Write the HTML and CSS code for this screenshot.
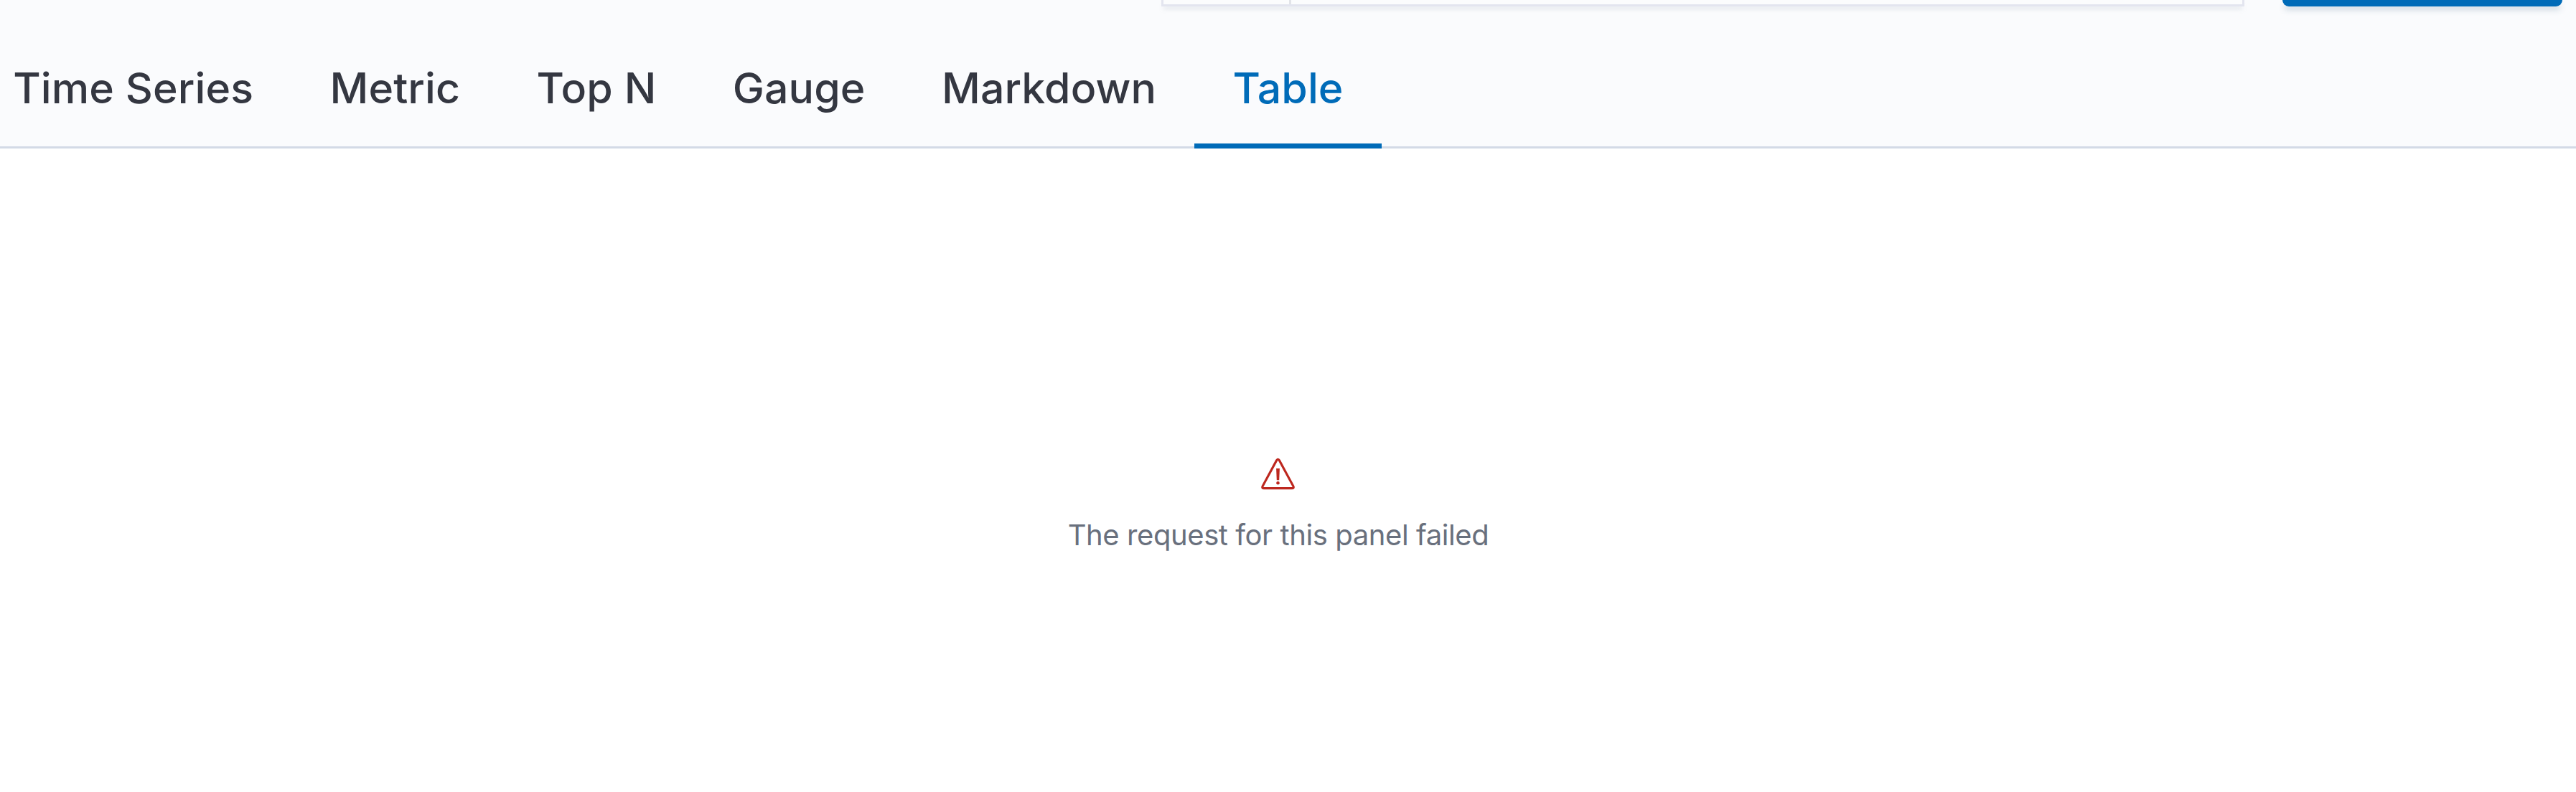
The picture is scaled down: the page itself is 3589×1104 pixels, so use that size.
FILE: index.html
```
<!DOCTYPE html>
<html lang="en">
<head>
    <meta charset="UTF-8">
    <meta name="viewport" content="width=device-width, initial-scale=1.0">
    <title>Visualize</title>
    <link rel="stylesheet" href="styles.css">
</head>
<body>
    <header class="queryBar">
        <div class="datePicker">
            <div class="datePicker-prepend"></div>
            <div class="datePicker-range"></div>
        </div>
        <button class="updateButton" aria-label="Update"></button>
    </header>
    <nav class="tabs">
        <button class="tab">Time Series</button>
        <button class="tab">Metric</button>
        <button class="tab">Top N</button>
        <button class="tab">Gauge</button>
        <button class="tab">Markdown</button>
        <button class="tab tab-selected">Table</button>
    </nav>
    <main class="panel">
        <svg class="alertIcon" viewBox="0 0 48 48">
            <path class="alertIcon-outline" d="M21.7 4.6 L2.2 40.6 Q0.9 43.7 3.9 43.7 H43.1 Q46.1 43.7 44.8 40.6 L25.3 4.6 Q23.5 1.9 21.7 4.6 Z"/>
            <path d="M21.1 16 h4.8 l-0.7 16.3 h-3.4 z"/>
            <circle cx="23.5" cy="36.3" r="2.3"/>
        </svg>
        <p class="panel-error">The request for this panel failed</p>
    </main>
</body>
</html>
```
FILE: styles.css
```
* {
    box-sizing: border-box;
}
body {
    display: flex;
    flex-direction: column;
    height: 100vh;
    margin: 0;
    background-color: #fff;
    font-family: Inter, sans-serif;
    overflow: hidden;
}
button {
    border: none;
    background: none;
    font-family: inherit;
}

/* query bar */
.queryBar {
    display: flex;
    justify-content: flex-end;
    gap: 53px;
    height: 33px;
    padding-right: 19px;
    background-color: #fafbfd;
}
.datePicker {
    display: flex;
    width: 1509px;
    height: 9px;
    border: 3px solid #e3e5ef;
    border-top: none;
    background-color: #fbfcfd;
    box-shadow: 0 6px 6px -3px rgba(152, 162, 179, 0.35);
}
.datePicker-prepend {
    width: 178px;
    border-right: 3px solid #e2e4e9;
}
.datePicker-range {
    flex: 1;
}
.updateButton {
    width: 390px;
    height: 9px;
    padding: 0;
    background-color: #006bb8;
    border-radius: 0 0 12px 12px;
    box-shadow: 0 6px 9px -2px rgba(54, 97, 126, 0.3);
}

/* tabs */
.tabs {
    display: flex;
    height: 174px;
    padding-right: 54px;
    margin-left: -35px;
    background-color: #fafbfd;
    box-shadow: inset 0 -3px 0 #d3dae6;
}
.tab {
    padding: 5px 53.2px 0;
    color: #343741;
    font-size: 59px;
    font-weight: 500;
    letter-spacing: 0.1px;
    white-space: nowrap;
}
.tab-selected {
    color: #006bb8;
    box-shadow: inset 0 -7px 0 #006bb8;
}

/* panel */
.panel {
    display: flex;
    flex-direction: column;
    align-items: center;
    flex: 1;
    padding: 430px 27px 0 0;
}
.alertIcon {
    width: 48px;
    height: 48px;
    fill: #bd271e;
}
.alertIcon-outline {
    fill: none;
    stroke: #bd271e;
    stroke-width: 3.2;
}
.panel-error {
    margin: 31px 0 0;
    color: #69707d;
    font-size: 40px;
    letter-spacing: -0.42px;
    line-height: 60px;
}
```
